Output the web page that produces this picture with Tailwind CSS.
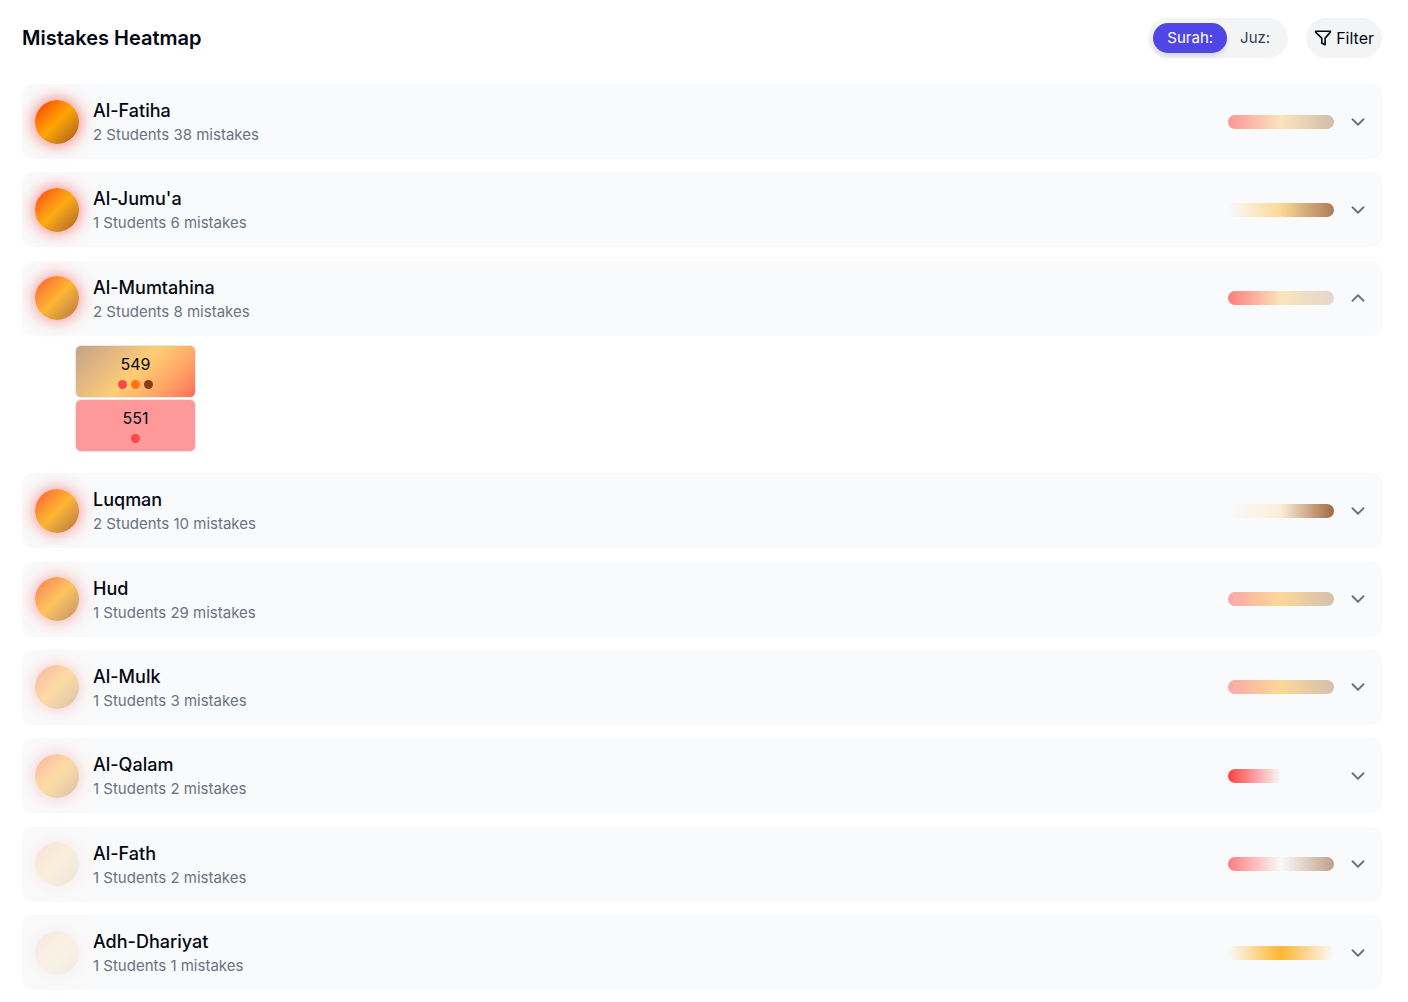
<!DOCTYPE html>
<html lang="en">

<head>
  <meta charset="UTF-8" />
  <title>Mistakes Heatmap</title>
  <script src="https://cdn.jsdelivr.net/npm/@tailwindcss/browser@4"></script>
</head>

<body class="bg-white font-['Inter',sans-serif] text-gray-950">
  <main class="min-h-screen flex flex-col pt-[18px] pb-3 pl-[22px] pr-[26px]">
    <!-- Header -->
    <header class="flex items-center justify-between mb-[26px]">
      <h1 class="text-[20px] leading-7 font-semibold">Mistakes Heatmap</h1>
      <div class="flex items-center gap-[18px]">
        <div class="flex items-center h-10 p-[5px] rounded-full bg-gray-100">
          <button type="button" class="h-[30px] px-[14px] rounded-full bg-[#4f46e5] text-white text-[15px] leading-5 shadow-md">Surah:</button>
          <button type="button" class="h-[30px] px-[13px] rounded-full text-gray-700 text-[15px] leading-5">Juz:</button>
        </div>
        <button type="button" class="flex items-center gap-1 h-10 px-2 rounded-full bg-gray-100 text-[16px] leading-5">
          <svg class="size-[18px]" viewBox="0 0 18 18" fill="none" stroke="currentColor" stroke-width="1.6" stroke-linejoin="round">
            <path d="M1.6 2.2h14.8v.9l-5.3 6v6.6l-3.3-1.4V9.1l-6.2-6z" />
          </svg>
          Filter
        </button>
      </div>
    </header>

    <!-- Surah rows -->
    <ul id="surahList" class="flex-1 flex flex-col justify-between gap-[13px]"></ul>
  </main>

  <template id="rowTemplate">
    <li>
      <button type="button" class="w-full flex items-center p-[13px] rounded-[10px] bg-gray-50 text-left">
        <span data-heat class="size-11 shrink-0 rounded-full bg-linear-135 from-[#ff0000] via-[#ffa500] to-[#a05514] shadow-[0_0_17px_rgba(255,0,0,0.6)]"></span>
        <span class="flex-1 ml-[14px]">
          <span data-name class="block text-[18px] leading-[27px] font-medium"></span>
          <span data-info class="block text-[15px] leading-[22px] text-gray-500"></span>
        </span>
        <span data-bar class="w-[106px] h-[14px] rounded-full"></span>
        <svg data-chevron class="size-[22px] ml-[13px] text-gray-500" viewBox="0 0 24 24" fill="none" stroke="currentColor" stroke-width="2" stroke-linecap="round" stroke-linejoin="round">
          <path d="m6 9 6 6 6-6" />
        </svg>
      </button>
    </li>
  </template>

  <template id="pagesTemplate">
    <div class="flex flex-col items-start gap-px mt-[9px] mb-2 ml-[53px]">
      <button type="button" class="w-[121px] p-2 rounded-md border border-gray-200 bg-linear-135 from-[#8b4513]/50 via-[#ffa500]/55 to-[#ff0000]/65 text-[16px] leading-5">
        549
        <span class="flex justify-center gap-1 mt-[6px]">
          <span class="size-[9px] rounded-full bg-[#f84949]"></span>
          <span class="size-[9px] rounded-full bg-[#ff7514]"></span>
          <span class="size-[9px] rounded-full bg-[#8b3c14]"></span>
        </span>
      </button>
      <button type="button" class="w-[121px] p-2 rounded-md border border-gray-200 bg-[#ff9999] text-[16px] leading-5">
        551
        <span class="flex justify-center mt-[6px]">
          <span class="size-[9px] rounded-full bg-[#f84949]"></span>
        </span>
      </button>
    </div>
  </template>

  <script>
    // bar: strength of the red, orange and brown mistakes
    const surahs = [
      { name: "Al-Fatiha", students: 2, mistakes: 38, heat: 0.98, bar: [0.4, 0.25, 0.35] },
      { name: "Al-Jumu'a", students: 1, mistakes: 6, heat: 0.92, bar: [0, 0.4, 0.7] },
      { name: "Al-Mumtahina", students: 2, mistakes: 8, heat: 0.8, bar: [0.5, 0.25, 0.2], open: true },
      { name: "Luqman", students: 2, mistakes: 10, heat: 0.8, bar: [0, 0.15, 0.8] },
      { name: "Hud", students: 1, mistakes: 29, heat: 0.63, bar: [0.33, 0.4, 0.33] },
      { name: "Al-Mulk", students: 1, mistakes: 3, heat: 0.34, bar: [0.33, 0.4, 0.33] },
      { name: "Al-Qalam", students: 1, mistakes: 2, heat: 0.34, bar: [0.75, 0, 0] },
      { name: "Al-Fath", students: 1, mistakes: 2, heat: 0.12, bar: [0.5, 0, 0.5] },
      { name: "Adh-Dhariyat", students: 1, mistakes: 1, heat: 0.09, bar: [0, 0.8, 0] }
    ];

    const list = document.getElementById('surahList');
    const rowTemplate = document.getElementById('rowTemplate');
    const pagesTemplate = document.getElementById('pagesTemplate');

    surahs.forEach(surah => {
      const row = rowTemplate.content.cloneNode(true);
      const [red, orange, brown] = surah.bar;

      row.querySelector('[data-heat]').style.opacity = surah.heat;
      row.querySelector('[data-name]').textContent = surah.name;
      row.querySelector('[data-info]').textContent = `${surah.students} Students ${surah.mistakes} mistakes`;
      row.querySelector('[data-bar]').style.background =
        `linear-gradient(90deg, rgba(255,0,0,${red}), rgba(255,165,0,${orange}), rgba(139,69,19,${brown}))`;

      if (surah.open) {
        row.querySelector('[data-chevron]').classList.add('rotate-180');
        row.querySelector('li').appendChild(pagesTemplate.content.cloneNode(true));
      }
      list.appendChild(row);
    });
  </script>
</body>

</html>
